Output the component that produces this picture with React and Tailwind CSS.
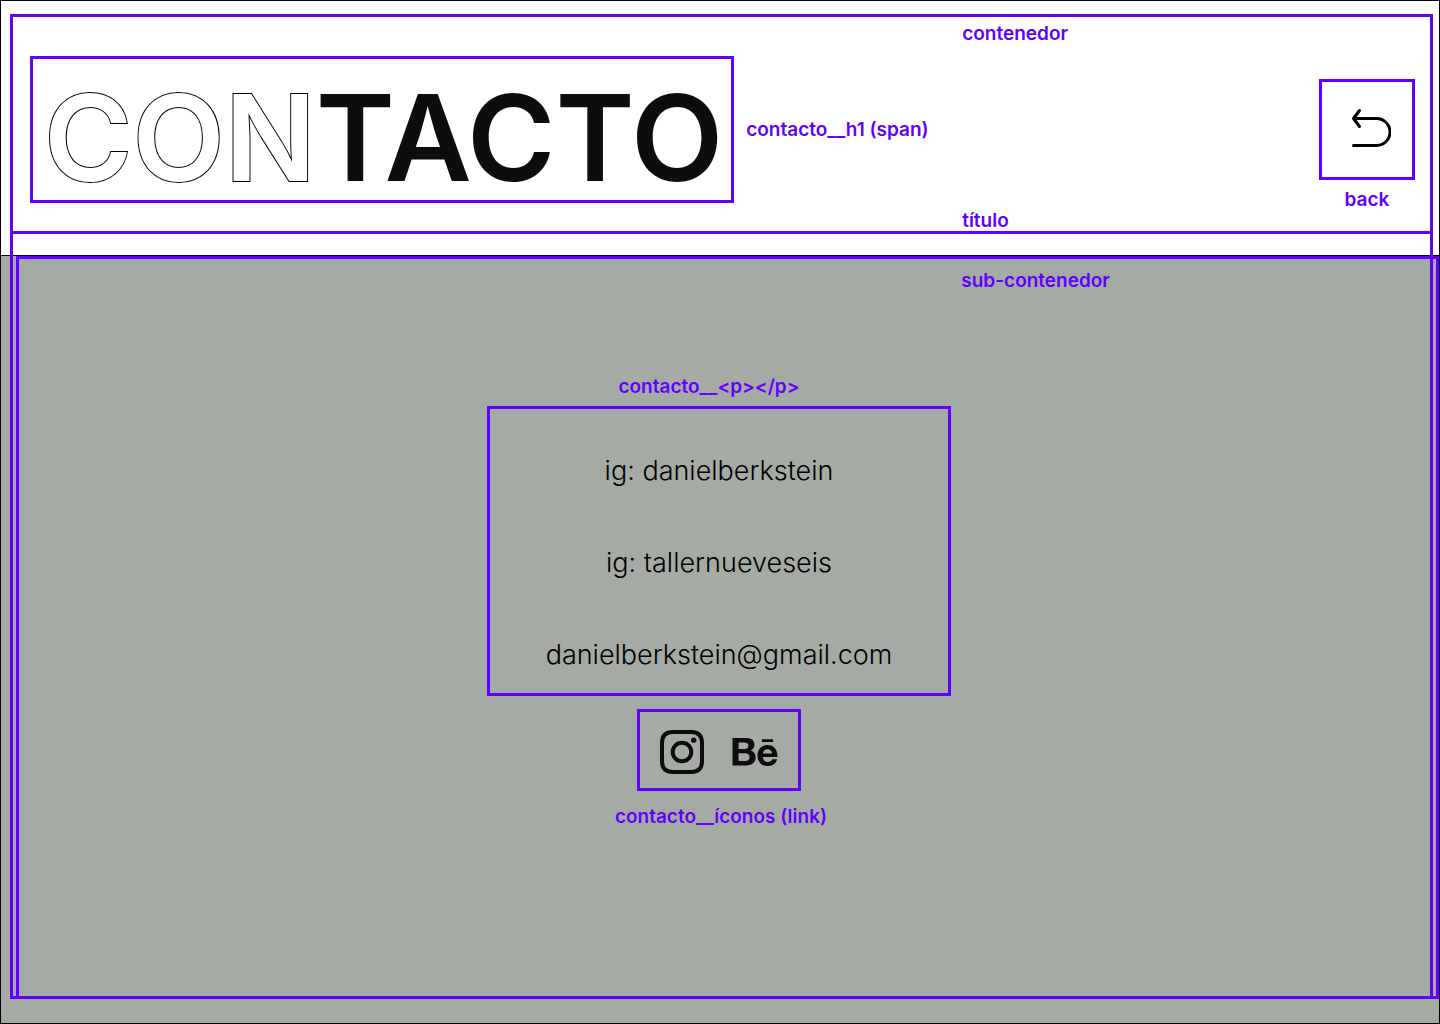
import { FaBehance } from "react-icons/fa";

function Label({ className = "", children }) {
  return (
    <p className={`text-[19px] leading-5 font-semibold whitespace-nowrap text-[#6200ff] ${className}`}>
      {children}
    </p>
  );
}

function BackIcon() {
  return (
    <svg
      width="40"
      height="40"
      viewBox="0 0 40 40"
      fill="none"
      stroke="#000"
      strokeWidth="3"
      strokeLinecap="round"
      strokeLinejoin="round"
      aria-hidden="true"
    >
      <path d="M3 10.500H25.500A13.500 13.500 0 0 1 25.500 37.500H2.500" />
      <path d="M8.500 2.500L2.500 10.500L8.500 18.500" />
    </svg>
  );
}

function InstagramIcon() {
  return (
    <svg width="44" height="44" viewBox="0 0 44 44" fill="none" stroke="#0d0d0d" strokeWidth="4" aria-hidden="true">
      <path d="M13 2H31Q42 2 42 13V31Q42 42 31 42H13Q2 42 2 31V13Q2 2 13 2Z" />
      <circle cx="22" cy="22" r="9.300" />
      <circle cx="33.700" cy="10.300" r="2.700" fill="#0d0d0d" stroke="none" />
    </svg>
  );
}

export default function App() {
  return (
    <div className="grid min-h-screen border border-black bg-white font-['Inter','Liberation_Sans',sans-serif]">
      <div className="col-start-1 row-start-1 flex flex-col">
        <div className="h-[255px] border-b border-black" />
        <div className="flex-1 bg-[#a5aba4]" />
      </div>

      <div className="col-start-1 row-start-1 flex pt-[13px] pr-[6px] pb-[24px] pl-[9px]">
        <div className="flex min-w-0 flex-1 flex-col border-3 border-[#6200ff]">
          <header className="flex items-stretch border-b-3 border-[#6200ff]">
            <h1 className="mt-[39px] mb-[28px] ml-[17px] border-3 border-[#6200ff] pt-[19px] pr-2 pb-[2px] pl-[11px] text-[120px] leading-[120px] font-semibold text-[#0d0d0d]">
              <span className="text-white [-webkit-text-stroke:2px_#000] [paint-order:stroke_fill]">CON</span>TACTO
            </h1>
            <Label className="ml-3 w-[204px] self-start pt-[103px]">contacto__h1 (span)</Label>
            <div className="ml-3 flex flex-1 flex-col justify-between pt-[7px]">
              <Label>contenedor</Label>
              <Label>título</Label>
            </div>
            <div className="mt-[62px] mr-[15px] flex flex-col items-center gap-[10px]">
              <button
                type="button"
                aria-label="back"
                className="flex h-[101px] w-[96px] items-center justify-center border-3 border-[#6200ff] pb-1 pl-2"
              >
                <BackIcon />
              </button>
              <Label>back</Label>
            </div>
          </header>

          <main className="mt-[22px] -mr-[9px] -mb-[3px] ml-[3px] flex flex-1 flex-col border-3 border-[#6200ff]">
            <Label className="ml-[66.5%] pt-3">sub-contenedor</Label>

            <div className="flex flex-col items-center pt-[86px] pr-[17px] pb-10">
              <Label className="pr-5">contacto__&lt;p&gt;&lt;/p&gt;</Label>
              <div className="mt-[9px] flex w-[464px] flex-col items-center gap-[46px] border-3 border-[#6200ff] pt-[39px] pb-[15px] text-[27px] leading-[46px] font-light text-black">
                <p>ig: danielberkstein</p>
                <p>ig: tallernueveseis</p>
                <p>danielberkstein@gmail.com</p>
              </div>
              <div className="mt-[13px] flex h-[82px] items-center gap-7 border-3 border-[#6200ff] px-5 text-[#0d0d0d]">
                <a href="#instagram" aria-label="Instagram" className="flex pt-1">
                  <InstagramIcon />
                </a>
                <a href="#behance" aria-label="Behance" className="flex pt-1">
                  <FaBehance className="h-10 w-[46px]" />
                </a>
              </div>
              <Label className="mt-4 pl-1">contacto__íconos (link)</Label>
            </div>
          </main>
        </div>
      </div>
    </div>
  );
}
